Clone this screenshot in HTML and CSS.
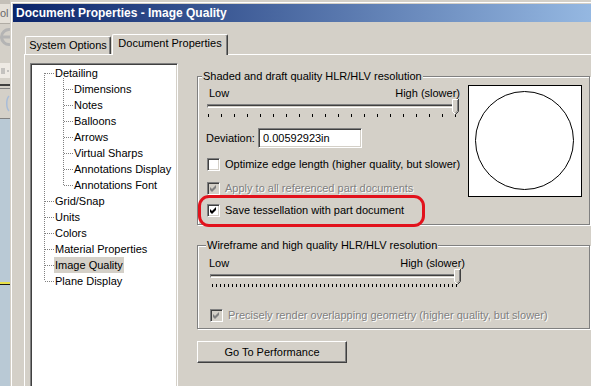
FILE: index.html
```html
<!DOCTYPE html>
<html lang="en">
<head>
    <meta charset="UTF-8">
    <title>Document Properties - Image Quality</title>
    <link rel="stylesheet" href="styles.css">
</head>
<body>
    <div class="desktop">
        <!-- window behind the dialog, only its edge shows -->
        <div class="behind">
            <div class="behind-top"></div>
            <div class="behind-menu">ol</div>
            <div class="behind-icon">
                <svg width="10" height="22" viewBox="0 0 10 22">
                    <path d="M10 11H1.5A7.5 7.5 0 0 1 10 3.5M1.5 11A7.5 7.5 0 0 0 10 18.5" fill="none" stroke="#b4b4b4" stroke-width="3"/>
                </svg>
            </div>
            <div class="behind-gap"></div>
            <div class="behind-box">
                <svg width="10" height="15" viewBox="0 0 10 15">
                    <path d="M1 6h4M1 8h4M1 10h4M7 8h2" stroke="#9a9a9a" stroke-width="1"/>
                </svg>
            </div>
            <div class="behind-gap small"></div>
            <div class="behind-sep"></div>
            <div class="behind-tool">
                <svg width="10" height="29" viewBox="0 0 10 29">
                    <path d="M9 7C6 10 6 19 9 22" fill="none" stroke="#a8bcd8" stroke-width="1.5"/>
                </svg>
            </div>
            <div class="behind-view">
                <div class="behind-line"></div>
            </div>
        </div>

        <div class="dialog">
            <div class="titlebar">Document Properties - Image Quality</div>
            <div class="dialog-body">
                <div class="tabs">
                    <div class="tab">System Options</div>
                    <div class="tab active">Document Properties</div>
                </div>
                <div class="panel">
                    <div class="tree">
                        <ul class="tree-root">
                            <li><span class="label">Detailing</span>
                                <ul class="tree-sub">
                                    <li><span class="label">Dimensions</span></li>
                                    <li><span class="label">Notes</span></li>
                                    <li><span class="label">Balloons</span></li>
                                    <li><span class="label">Arrows</span></li>
                                    <li><span class="label">Virtual Sharps</span></li>
                                    <li><span class="label">Annotations Display</span></li>
                                    <li><span class="label">Annotations Font</span></li>
                                </ul>
                            </li>
                            <li><span class="label">Grid/Snap</span></li>
                            <li><span class="label">Units</span></li>
                            <li><span class="label">Colors</span></li>
                            <li><span class="label">Material Properties</span></li>
                            <li><span class="label selected">Image Quality</span></li>
                            <li><span class="label">Plane Display</span></li>
                        </ul>
                    </div>

                    <div class="settings">
                        <div class="group group-shaded">
                            <div class="group-title">Shaded and draft quality HLR/HLV resolution</div>
                            <div class="shaded-grid">
                                <div class="controls">
                                    <div class="slider">
                                        <div class="scale"><span>Low</span><span class="high">High (slower)</span></div>
                                        <div class="track-area">
                                            <div class="track"></div>
                                            <svg class="thumb" width="7" height="16" viewBox="0 0 7 16">
                                                <polygon points="0,0 7,0 7,12 3.5,15.5 0,12" fill="#d4d0c8"/>
                                                <path d="M0.5 12.5V0.5H6.5" fill="none" stroke="#fff"/>
                                                <path d="M6.5 0V12.5L3.5 15.5" fill="none" stroke="#404040"/>
                                                <path d="M5.5 1V12L3.5 14" fill="none" stroke="#808080"/>
                                                <path d="M0.5 12.5L3 15" fill="none" stroke="#fff"/>
                                            </svg>
                                        </div>
                                        <div class="ticks"></div>
                                    </div>

                                    <div class="field">
                                        <span class="field-label">Deviation:</span>
                                        <input class="input" type="text" value="0.00592923in" readonly>
                                    </div>

                                    <div class="check first">
                                        <span class="box"></span>
                                        <span>Optimize edge length (higher quality, but slower)</span>
                                    </div>
                                    <div class="check">
                                        <span class="box disabled">
                                            <svg width="9" height="9" viewBox="0 0 9 9"><polygon points="1,3 3,5 7,1 7,4 3,8 1,6" fill="#808080"/></svg>
                                        </span>
                                        <span class="muted">Apply to all referenced part documents</span>
                                    </div>
                                    <div class="check marked">
                                        <span class="box">
                                            <svg width="9" height="9" viewBox="0 0 9 9"><polygon points="1,3 3,5 7,1 7,4 3,8 1,6" fill="#000"/></svg>
                                        </span>
                                        <span>Save tessellation with part document</span>
                                        <div class="callout"></div>
                                    </div>
                                </div>

                                <div class="preview">
                                    <svg width="112" height="110" viewBox="0 0 112 110">
                                        <circle cx="55.5" cy="54.5" r="49" fill="none" stroke="#000" stroke-width="1"/>
                                    </svg>
                                </div>
                            </div>
                        </div>

                        <div class="group group-wire">
                            <div class="group-title">Wireframe and high quality HLR/HLV resolution</div>
                            <div class="slider">
                                <div class="scale"><span>Low</span><span class="high">High (slower)</span></div>
                                <div class="track-area">
                                    <div class="track"></div>
                                    <svg class="thumb" width="7" height="16" viewBox="0 0 7 16">
                                        <polygon points="0,0 7,0 7,12 3.5,15.5 0,12" fill="#d4d0c8"/>
                                        <path d="M0.5 12.5V0.5H6.5" fill="none" stroke="#fff"/>
                                        <path d="M6.5 0V12.5L3.5 15.5" fill="none" stroke="#404040"/>
                                        <path d="M5.5 1V12L3.5 14" fill="none" stroke="#808080"/>
                                        <path d="M0.5 12.5L3 15" fill="none" stroke="#fff"/>
                                    </svg>
                                </div>
                                <div class="ticks"></div>
                            </div>
                            <div class="check">
                                <span class="box disabled">
                                    <svg width="9" height="9" viewBox="0 0 9 9"><polygon points="1,3 3,5 7,1 7,4 3,8 1,6" fill="#808080"/></svg>
                                </span>
                                <span class="muted">Precisely render overlapping geometry (higher quality, but slower)</span>
                            </div>
                        </div>

                        <button class="btn" type="button">Go To Performance</button>
                    </div>
                </div>
            </div>
        </div>
    </div>
</body>
</html>
```

FILE: styles.css
```css
body {
    margin: 0;
    width: 591px;
    height: 386px;
    overflow: hidden;
    background: #d4d0c8;
    font: 11px "Liberation Sans", Arial, sans-serif;
    color: #000;
}
.desktop {
    display: flex;
    height: 386px;
    overflow: hidden;
}

/* window behind */
.behind {
    width: 10px;
    flex: none;
    display: flex;
    flex-direction: column;
    overflow: hidden;
    background: #d4d0c8;
}
.behind svg {
    display: block;
}
.behind-top {
    height: 4px;
    background: #c4c0b8;
}
.behind-menu {
    height: 19px;
    line-height: 19px;
    background: #e4e0d8;
    color: #6a6a6a;
    white-space: nowrap;
}
.behind-icon {
    height: 26px;
    padding-top: 2px;
    box-sizing: border-box;
    border-top: 1px solid #b0aca4;
}
.behind-gap {
    height: 14px;
}
.behind-gap.small {
    height: 6px;
}
.behind-box {
    height: 15px;
    background: #eeeae4;
}
.behind-sep {
    height: 2px;
    border-top: 2px solid #404040;
    border-bottom: 1px solid #808080;
}
.behind-tool {
    height: 29px;
}
.behind-view {
    flex: 1;
    border-top: 1px solid #808080;
    background: #b9c9d5;
    padding-top: 163px;
}
.behind-line {
    height: 2px;
    border-bottom: 1px solid #1a1a1a;
    background: #e8e048;
}

/* dialog frame */
.dialog {
    flex: 1;
    min-width: 0;
    overflow: hidden;
    margin-top: 1px;
    border-top: 1px solid #d4d0c8;
    border-left: 1px solid #d4d0c8;
    box-shadow: inset 1px 1px 0 #fff;
    padding: 2px 0 0 2px;
    background: #d4d0c8;
}
.titlebar {
    height: 18px;
    line-height: 18px;
    padding-left: 3px;
    color: #fff;
    font-weight: bold;
    font-size: 12px;
    white-space: nowrap;
    background: #a6caf0 linear-gradient(to right, #0a246a, #a6caf0) 0 0 / 649px 100% no-repeat;
}
.dialog-body {
    padding: 12px 0 0 11px;
}

/* tabs */
.tabs {
    display: flex;
    align-items: flex-end;
    padding-left: 1px;
}
.tab {
    width: 86px;
    height: 18px;
    box-sizing: border-box;
    border-top: 1px solid #fff;
    border-left: 1px solid #fff;
    border-right: 1px solid #404040;
    border-radius: 2px 2px 0 0;
    box-shadow: inset -1px 0 0 #808080;
    text-align: center;
    line-height: 17px;
    white-space: nowrap;
}
.tab.active {
    position: relative;
    width: 116px;
    height: 21px;
    margin-left: 1px;
    margin-bottom: -1px;
    background: #d4d0c8;
}
.panel {
    display: flex;
    height: 331px;
    border-top: 1px solid #fff;
    border-left: 1px solid #fff;
    padding: 8px 0 0 5px;
}

/* tree */
.tree {
    width: 148px;
    height: 326px;
    flex: none;
    box-sizing: border-box;
    padding: 1px;
    background: #fff;
    border: 1px solid;
    border-color: #808080 #fff #fff #808080;
    box-shadow: inset 1px 1px 0 #404040, inset -1px -1px 0 #d4d0c8;
}
.tree ul {
    list-style: none;
    margin: 0;
    padding: 0;
}
.tree li {
    line-height: 16px;
    white-space: nowrap;
    background-image: repeating-linear-gradient(to right, #808080 0 1px, transparent 1px 2px);
    background-repeat: no-repeat;
    background-size: 9px 1px;
}
.tree-root {
    background: repeating-linear-gradient(#808080 0 1px, transparent 1px 2px) 12px 8px / 1px calc(100% - 16px) no-repeat;
}
.tree-root > li {
    padding-left: 22px;
    background-position: 13px 8px;
}
.tree .tree-sub {
    margin-top: -3px;
    padding-top: 3px;
    background: repeating-linear-gradient(#808080 0 1px, transparent 1px 2px) 9px 0 / 1px calc(100% - 8px) no-repeat;
}
.tree-sub > li {
    padding-left: 19px;
    background-position: 10px 8px;
}
.label {
    display: inline-block;
    padding: 0 1px;
}
.label.selected {
    background: #d4d0c8;
}

/* right side */
.settings {
    width: 393px;
    flex: none;
    margin-left: 19px;
    padding-top: 13px;
}
.group {
    border: 1px solid #808080;
    box-shadow: inset 1px 1px 0 #fff, 1px 1px 0 #fff;
}
.group-title {
    display: table;
    margin: -7px 0 0 -5px;
    padding: 0 1px;
    line-height: 13px;
    background: #d4d0c8;
}
.group-shaded {
    padding: 0 7px 6px 9px;
}
.group-wire {
    margin-top: 20px;
    padding: 0 7px 5px 12px;
}
.group-wire .group-title {
    margin-left: -4px;
}
.shaded-grid {
    display: grid;
    grid-template-columns: 254px 114px;
    column-gap: 7px;
    align-items: start;
    margin-top: 2px;
}

/* slider */
.slider {
    width: 252px;
}
.group-wire .slider {
    width: 251px;
}
.scale {
    display: flex;
    justify-content: space-between;
    line-height: 13px;
    margin: 2px -1px 0 2px;
}
.group-wire .scale {
    margin: 5px -4px 0 -1px;
}
.track-area {
    position: relative;
    height: 14px;
}
.track {
    position: relative;
    top: 4px;
    height: 4px;
    box-sizing: border-box;
    background: #d4d0c8;
    border: 1px solid;
    border-color: #808080 #fff #fff #808080;
    box-shadow: inset 0 1px 0 #404040;
}
.thumb {
    position: absolute;
    right: 0;
    top: -1px;
}
.ticks {
    height: 3px;
    width: 248px;
    margin-left: 1px;
    background: repeating-linear-gradient(to right, #000 0 1px, transparent 1px 13px);
}
.group-wire .ticks {
    width: 247px;
    margin-left: 2px;
    background: repeating-linear-gradient(to right, #000 0 1px, transparent 1px 4px);
}

/* deviation field */
.field {
    display: flex;
    align-items: center;
    margin-top: 11px;
}
.field-label {
    width: 52px;
    margin-left: -1px;
}
.input {
    width: 104px;
    height: 20px;
    box-sizing: border-box;
    margin: 0;
    padding: 0 0 0 4px;
    font: inherit;
    color: #000;
    background: #fff;
    border: 1px solid;
    border-color: #808080 #fff #fff #808080;
    box-shadow: inset 1px 1px 0 #404040, inset -1px -1px 0 #d4d0c8;
    outline: none;
}

/* checkboxes */
.check {
    display: flex;
    align-items: center;
    gap: 5px;
    height: 16px;
    margin-top: 8px;
    white-space: nowrap;
}
.check.marked {
    position: relative;
    margin-top: 6px;
}
.group-wire .check {
    margin-top: 20px;
}
.box {
    width: 13px;
    height: 13px;
    flex: none;
    box-sizing: border-box;
    padding: 1px;
    display: flex;
    background: #fff;
    border: 1px solid;
    border-color: #808080 #fff #fff #808080;
    box-shadow: inset 1px 1px 0 #404040, inset -1px -1px 0 #d4d0c8;
}
.box.disabled {
    background: #d4d0c8;
}
.muted {
    color: #808080;
    text-shadow: 1px 1px 0 #fff;
}
.callout {
    position: absolute;
    left: -9px;
    top: -7px;
    width: 227px;
    height: 32px;
    box-sizing: border-box;
    border: 3px solid #e2121c;
    border-radius: 11px;
}

/* preview */
.preview {
    width: 114px;
    height: 112px;
    box-sizing: border-box;
    border: 1px solid #000;
    background: #fff;
}
.preview svg {
    display: block;
}

/* button */
.btn {
    display: block;
    width: 150px;
    height: 22px;
    margin-top: 12px;
    padding: 0;
    font: inherit;
    color: #000;
    background: #d4d0c8;
    border: 1px solid;
    border-color: #fff #404040 #404040 #fff;
    box-shadow: inset -1px -1px 0 #808080;
}
```
